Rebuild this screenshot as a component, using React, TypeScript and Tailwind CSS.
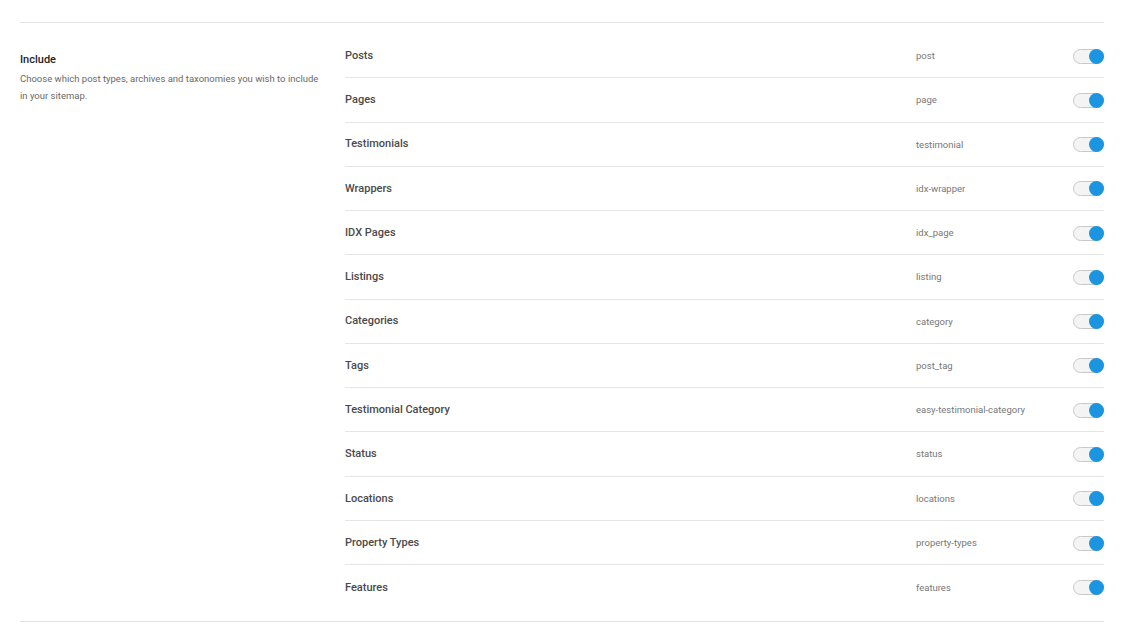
import React from 'react'

const types = [
  { label: 'Posts', slug: 'post' },
  { label: 'Pages', slug: 'page' },
  { label: 'Testimonials', slug: 'testimonial' },
  { label: 'Wrappers', slug: 'idx-wrapper' },
  { label: 'IDX Pages', slug: 'idx_page' },
  { label: 'Listings', slug: 'listing' },
  { label: 'Categories', slug: 'category' },
  { label: 'Tags', slug: 'post_tag' },
  { label: 'Testimonial Category', slug: 'easy-testimonial-category' },
  { label: 'Status', slug: 'status' },
  { label: 'Locations', slug: 'locations' },
  { label: 'Property Types', slug: 'property-types' },
  { label: 'Features', slug: 'features' },
]

function Toggle() {
  return (
    <span className="relative flex h-[15px] w-[31px] items-center rounded-full border border-[#c9c9c9] bg-[#f4f4f4]">
      <span className="absolute -right-px h-[15px] w-[15px] rounded-full bg-[#1b95e0]" />
    </span>
  )
}

export default function App() {
  return (
    <div className="min-h-[637px] bg-white font-['Roboto',sans-serif]">
      <div className="ml-5 mr-[17px] mt-[22px] border-t border-[#e3e3e3]">
        <div className="flex pt-[11px] pb-[12px]">
          {/* section description */}
          <div className="w-[325px] shrink-0 pt-[17px] pr-6">
            <h3 className="text-[11px] font-medium leading-[17px] text-[#1d2327]">Include</h3>
            <p className="mt-[2px] text-[9.5px] leading-[17px] text-[#6a6a6a]">
              Choose which post types, archives and taxonomies you wish to include in your sitemap.
            </p>
          </div>

          {/* toggles */}
          <div className="flex-1">
            {types.map((t, i) => (
              <div
                key={t.slug}
                className={`flex h-[44.27px] items-center pt-px ${i < types.length - 1 ? 'border-b border-[#e5e5e5]' : ''}`}
              >
                <span className="flex-1 text-[11px] font-medium text-[#4a4a4a]">{t.label}</span>
                <span className="w-[157px] text-[9.5px] text-[#777]">{t.slug}</span>
                <Toggle />
              </div>
            ))}
          </div>
        </div>
        <div className="border-t border-[#e3e3e3]" />
      </div>
    </div>
  )
}
